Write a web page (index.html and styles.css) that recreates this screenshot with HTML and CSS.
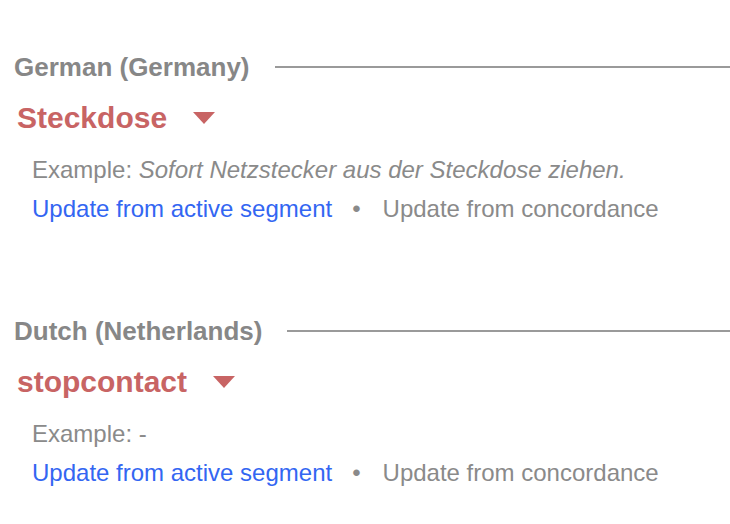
FILE: index.html
```html
<!DOCTYPE html>
<html lang="en">
<head>
<meta charset="utf-8">
<title>Terms</title>
<link rel="stylesheet" href="styles.css">
</head>
<body>
<div class="page">
  <section class="lang lang-first">
    <div class="lang-head">
      <span class="lang-name">German (Germany)</span>
      <span class="lang-rule"></span>
    </div>
    <div class="term">
      <span class="term-text">Steckdose</span>
      <svg class="caret" width="22" height="12" viewBox="0 0 22 12"><polygon points="0,0 22,0 11,12" fill="#c86464"/></svg>
    </div>
    <div class="example">Example: <em>Sofort Netzstecker aus der Steckdose ziehen.</em></div>
    <div class="actions">
      <a class="act-link" href="#">Update from active segment</a>
      <span class="dot">•</span>
      <span class="act-muted">Update from concordance</span>
    </div>
  </section>
  <section class="lang lang-second">
    <div class="lang-head">
      <span class="lang-name">Dutch (Netherlands)</span>
      <span class="lang-rule"></span>
    </div>
    <div class="term">
      <span class="term-text">stopcontact</span>
      <svg class="caret" width="22" height="12" viewBox="0 0 22 12"><polygon points="0,0 22,0 11,12" fill="#c86464"/></svg>
    </div>
    <div class="example">Example: -</div>
    <div class="actions">
      <a class="act-link" href="#">Update from active segment</a>
      <span class="dot">•</span>
      <span class="act-muted">Update from concordance</span>
    </div>
  </section>
</div>
</body>
</html>
```

FILE: styles.css
```css
html, body {
  margin: 0;
  padding: 0;
  background: #ffffff;
}
body {
  font-family: "Liberation Sans", Arial, sans-serif;
  width: 730px;
  height: 524px;
  overflow: hidden;
}
.page {
  padding: 52px 0 0 14px;
}
.lang-second {
  margin-top: 92px;
}
.lang-head {
  display: flex;
  align-items: center;
  height: 30px;
}
.lang-name {
  font-size: 26px;
  font-weight: bold;
  line-height: 30px;
  color: #878787;
  white-space: nowrap;
}
.lang-rule {
  flex: 1;
  height: 2px;
  background: #9a9a9a;
  margin-left: 25px;
}
.term {
  display: flex;
  align-items: center;
  margin-top: 18px;
  padding-left: 3px;
  height: 36px;
}
.term-text {
  font-size: 30px;
  font-weight: bold;
  line-height: 36px;
  color: #c86464;
}
.caret {
  display: block;
  margin-left: 26px;
  margin-top: -1px;
}
.example {
  margin-top: 19px;
  padding-left: 18px;
  font-size: 24px;
  line-height: 30px;
  color: #8a8a8a;
}
.example em {
  font-style: italic;
}
.actions {
  margin-top: 9px;
  padding-left: 18px;
  font-size: 24px;
  line-height: 30px;
  display: flex;
  align-items: baseline;
}
.act-link {
  color: #3366f2;
  text-decoration: none;
}
.dot {
  color: #8a8a8a;
  margin: 0 22px 0 20px;
}
.act-muted {
  color: #8a8a8a;
}
```
